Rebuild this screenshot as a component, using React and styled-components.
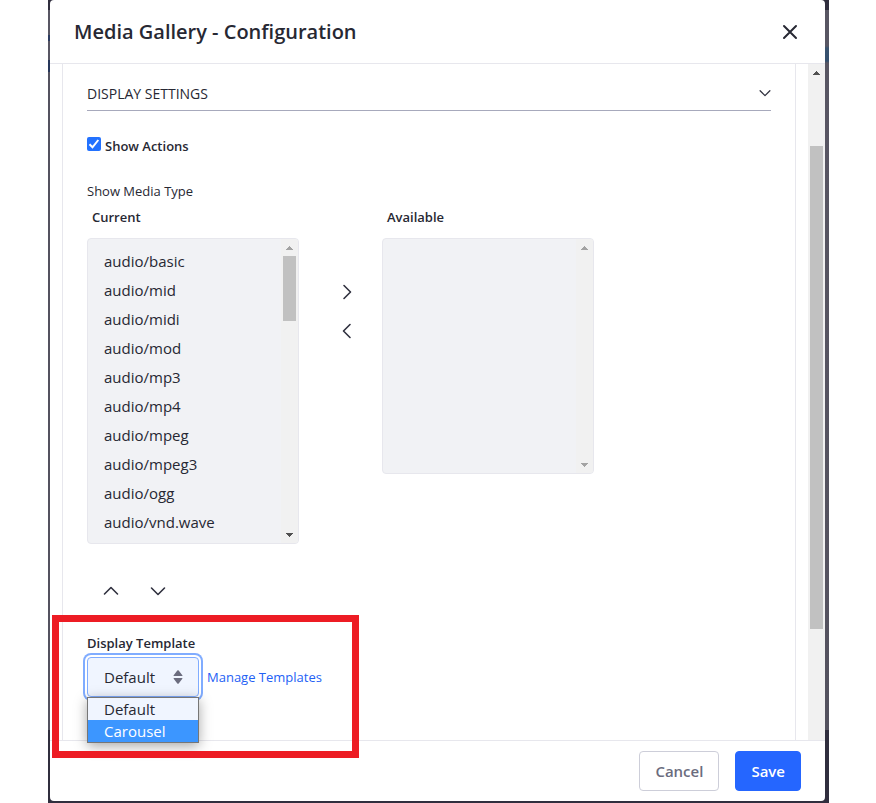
import React, { useState } from "react";
import styled, { createGlobalStyle } from "styled-components";

const GlobalStyle = createGlobalStyle`
  *, *::before, *::after { box-sizing: border-box; }
  body {
    margin: 0;
    background: #fff;
    color: #272833;
    font-family: "Open Sans", "Noto Sans", sans-serif;
    font-size: 13px;
    line-height: 21px;
  }
  button, input, select { font: inherit; color: inherit; margin: 0; }
`;

const Page = styled.main`
  display: flex;
  min-height: 100vh;
  padding: 0 47px 0 48px;
`;

const Backdrop = styled.div`
  flex: 1;
  display: flex;
  padding: 0 4px 2px 2px;
  background:
    linear-gradient(#302e3e 10px, #585663 10px, #585663 46px, #3a536f 48px, #34506e 61px, #585663 63px, #54525f calc(100% - 73px), #302e3e calc(100% - 73px)) right / 50% 100% no-repeat,
    linear-gradient(#302e3e 10px, #585663 10px, #585663 35px, #2c3c60 35px, #2c3c60 41px, #585663 41px, #585663 60px, #26365a 60px, #26365a 72px, #54525f 72px, #54525f calc(100% - 73px), #302e3e calc(100% - 73px));
`;

const Dialog = styled.section`
  flex: 1;
  min-width: 0;
  display: flex;
  flex-direction: column;
  background: #fff;
  border-radius: 4px;
`;

const Header = styled.header`
  display: flex;
  align-items: center;
  justify-content: space-between;
  height: 64px;
  padding: 1px 19px 0 24px;
  border-bottom: 1px solid #e7e7ed;
`;

const Title = styled.h1`
  margin: 0;
  font-size: 20px;
  font-weight: 600;
  line-height: 28px;
`;

const IconButton = styled.button`
  display: flex;
  align-items: center;
  justify-content: center;
  width: 32px;
  height: 32px;
  padding: 0;
  border: 0;
  background: none;
  cursor: pointer;
`;

const Body = styled.div`
  flex: 1;
  display: flex;
  padding-left: 12px;
`;

const Panel = styled.div`
  flex: 1;
  min-width: 0;
  margin-right: 12px;
  padding: 0 24px;
  border: solid #e7e7ed;
  border-width: 0 1px;
`;

const SectionToggle = styled.button`
  display: flex;
  align-items: center;
  justify-content: space-between;
  width: 100%;
  height: 47px;
  padding: 12px 0 0;
  border: 0;
  border-bottom: 1px solid #a7a9bc;
  background: none;
  font-size: 14px;
  font-weight: 500;
  text-align: left;
`;

const CheckRow = styled.label`
  display: flex;
  align-items: flex-start;
  gap: 4px;
  margin: 25px 0 24px;
  font-weight: 600;
`;

const Checkbox = styled.input`
  appearance: none;
  width: 14px;
  height: 14px;
  && { margin-top: 1px; }
  border-radius: 2px;
  border: 1px solid #767676;
  &:checked {
    border: 0;
    background: #2372ff url("data:image/svg+xml,%3Csvg xmlns='http://www.w3.org/2000/svg' viewBox='0 0 14 14'%3E%3Cpath d='M2.5 7.3 5.5 10.300 11.300 3' fill='none' stroke='white' stroke-width='2'/%3E%3C/svg%3E");
  }
`;

const Group = styled.fieldset`
  min-width: 0;
  margin: 0;
  padding: 0;
  border: 0;
`;

const Legend = styled.legend`
  padding: 0;
  margin-bottom: 5px;
`;

const Transfer = styled.div`
  display: grid;
  grid-template-columns: minmax(0, 212px) 83px minmax(0, 212px);
  align-items: start;
`;

const ListLabel = styled.label`
  display: block;
  margin-bottom: 10px;
  padding-left: 5px;
  font-weight: 600;
`;

const ListFrame = styled.div`
  display: flex;
  height: ${(p) => (p.$tall ? 306 : 236)}px;
  border: 1px solid #e7e7ed;
  border-radius: 4px;
  background: #f1f2f5;
  overflow: hidden;
`;

const List = styled.select`
  appearance: none;
  flex: 1;
  min-width: 0;
  height: 100%;
  padding: 12px 16px 0;
  border: 0;
  outline: 0;
  background: none;
  font-size: 15px;
  overflow: hidden;
  scrollbar-width: none;
  option {
    min-height: 29px;
    padding: 0;
    line-height: 29px;
  }
`;

const Track = styled.div`
  display: flex;
  flex-direction: column;
  align-items: center;
  justify-content: space-between;
  flex: 0 0 17px;
  width: 17px;
  background: #f1f1f1;
`;

const TrackRun = styled.div`
  flex: 1;
  display: flex;
  flex-direction: column;
`;

const Thumb = styled.div`
  width: 13px;
  flex: 0 0 ${(p) => p.$size};
  margin-top: ${(p) => p.$offset || "0"};
  background: #c1c1c1;
`;

const ArrowCell = styled.span`
  display: flex;
  align-items: center;
  justify-content: center;
  height: 17px;
  color: ${(p) => (p.$muted ? "#a3a3a3" : "#505050")};
`;

const MoveButtons = styled.div`
  display: flex;
  flex-direction: column;
  align-items: center;
  gap: 7px;
  padding: 69px 0 0 13px;
`;

const OrderButtons = styled.div`
  display: flex;
  gap: 15px;
  margin: 31px 0 26px 8px;
`;

const Field = styled.div`
  position: relative;
`;

const FieldLabel = styled.label`
  display: block;
  margin-bottom: 3px;
  font-weight: 600;
`;

const FieldRow = styled.div`
  display: flex;
  align-items: center;
  gap: 8px;
`;

const Picker = styled.div`
  position: relative;
  width: 112px;
`;

const PickerSelect = styled.select`
  appearance: none;
  display: block;
  width: 100%;
  height: 40px;
  padding: 0 32px 0 16px;
  border: 1px solid #80acff;
  border-radius: 4px;
  outline: 0;
  background: #f0f5ff;
  box-shadow: 0 0 0 2px #fff, 0 0 0 4px #80acff;
  font-size: 15px;
`;

const PickerIcon = styled.span`
  position: absolute;
  top: 0;
  right: 16px;
  display: flex;
  align-items: center;
  height: 40px;
  pointer-events: none;
`;

const Menu = styled.ul`
  position: absolute;
  z-index: 2;
  top: 40px;
  left: 0;
  width: 100%;
  margin: 0;
  padding: 0;
  border: 1px solid #767676;
  background: #f0f5ff;
  box-shadow: 0 3px 12px rgba(0, 0, 0, 0.35);
  list-style: none;
  font-size: 15px;
`;

const MenuItem = styled.li`
  padding-left: 16px;
  line-height: 22px;
  color: ${(p) => (p.$active ? "#fff" : "inherit")};
  background: ${(p) => (p.$active ? "#3c96ff" : "none")};
`;

const Link = styled.a`
  color: #2361f5;
  text-decoration: none;
`;

const Highlight = styled.div`
  position: absolute;
  z-index: 3;
  top: -18px;
  left: -35px;
  width: 307px;
  height: 143px;
  border: 7px solid #ed1c24;
  pointer-events: none;
`;

const Footer = styled.footer`
  display: flex;
  justify-content: flex-end;
  gap: 16px;
  padding: 10px 24px;
  border-top: 1px solid #e7e7ed;
`;

const Button = styled.button`
  height: 40px;
  padding: 0 15px;
  border: 1px solid ${(p) => (p.$primary ? "#2566ff" : "#cdced9")};
  border-radius: 4px;
  background: ${(p) => (p.$primary ? "#2566ff" : "#fff")};
  color: ${(p) => (p.$primary ? "#fff" : "#6b6c7e")};
  font-size: 15px;
  font-weight: 600;
`;

const ANGLES = {
  up: "M1.500 11 8 4.500 14.500 11",
  down: "M1.500 5 8 11.500 14.500 5",
  right: "M5 1.500 11.500 8 5 14.500",
  left: "M11 1.500 4.500 8 11 14.500",
};

function Angle({ dir, size = 16, stroke = 1.6 }) {
  return (
    <svg width={size} height={size} viewBox="0 0 16 16" fill="none" stroke="#30313f" strokeWidth={stroke} strokeLinecap="round" strokeLinejoin="round" aria-hidden="true">
      <path d={ANGLES[dir]} />
    </svg>
  );
}

function Triangle({ down }) {
  return (
    <svg width="7" height="4" viewBox="0 0 7 4" fill="currentColor" shapeRendering="crispEdges" aria-hidden="true">
      <path d={down ? "M0 0h7v1H6v1H5v1H4v1H3V3H2V2H1V1H0z" : "M0 4h7V3H6V2H5V1H4V0H3v1H2v1H1v1H0z"} />
    </svg>
  );
}

function Scrollbar({ size, offset, upMuted, downMuted, hideDown }) {
  return (
    <Track aria-hidden="true">
      <ArrowCell $muted={upMuted}><Triangle /></ArrowCell>
      <TrackRun>{size && <Thumb $size={size} $offset={offset} />}</TrackRun>
      {!hideDown && <ArrowCell $muted={downMuted}><Triangle down /></ArrowCell>}
    </Track>
  );
}

const TYPES = [
  "audio/basic", "audio/mid", "audio/midi", "audio/mod", "audio/mp3",
  "audio/mp4", "audio/mpeg", "audio/mpeg3", "audio/ogg", "audio/vnd.wave",
];

export default function App() {
  const [actions, setActions] = useState(true);
  return (
    <Page>
      <GlobalStyle />
      <Backdrop>
        <Dialog role="dialog" aria-labelledby="title">
          <Header>
            <Title id="title">Media Gallery - Configuration</Title>
            <IconButton type="button" aria-label="Close">
              <svg width="16" height="16" viewBox="0 0 16 16" stroke="#272833" strokeWidth="2" strokeLinecap="round" aria-hidden="true">
                <path d="M2 2 14 14M14 2 2 14" />
              </svg>
            </IconButton>
          </Header>
          <Body>
            <Panel>
              <SectionToggle type="button" aria-expanded="true">
                DISPLAY SETTINGS
                <Angle dir="down" size={12} stroke={1.7} />
              </SectionToggle>
              <CheckRow>
                <Checkbox type="checkbox" checked={actions} onChange={(e) => setActions(e.target.checked)} />
                Show Actions
              </CheckRow>
              <Group>
                <Legend>Show Media Type</Legend>
                <Transfer>
                  <div>
                    <ListLabel htmlFor="current">Current</ListLabel>
                    <ListFrame $tall>
                      <List id="current" multiple size={10}>
                        {TYPES.map((t) => <option key={t}>{t}</option>)}
                      </List>
                      <Scrollbar size="65px" upMuted />
                    </ListFrame>
                  </div>
                  <MoveButtons>
                    <IconButton type="button" aria-label="Move right"><Angle dir="right" /></IconButton>
                    <IconButton type="button" aria-label="Move left"><Angle dir="left" /></IconButton>
                  </MoveButtons>
                  <div>
                    <ListLabel htmlFor="available">Available</ListLabel>
                    <ListFrame>
                      <List id="available" multiple />
                      <Scrollbar upMuted downMuted />
                    </ListFrame>
                  </div>
                </Transfer>
                <OrderButtons>
                  <IconButton type="button" aria-label="Move up"><Angle dir="up" /></IconButton>
                  <IconButton type="button" aria-label="Move down"><Angle dir="down" /></IconButton>
                </OrderButtons>
              </Group>
              <Field>
                <FieldLabel htmlFor="template">Display Template</FieldLabel>
                <FieldRow>
                  <Picker>
                    <PickerSelect id="template" defaultValue="Default">
                      <option>Default</option>
                      <option>Carousel</option>
                    </PickerSelect>
                    <PickerIcon>
                      <svg width="10" height="14" viewBox="0 0 10 14" fill="#6b6c7e" aria-hidden="true">
                        <path d="M.5 5.500 4.300.500q.7-.7 1.400 0L9.500 5.500q0 .5-.5.500H1q-.5 0-.5-.5zM.5 8.500 4.300 13.500q.7.700 1.400 0L9.500 8.500q0-.5-.5-.5H1q-.5 0-.5.500z" />
                      </svg>
                    </PickerIcon>
                    <Menu role="listbox" aria-label="Display Template">
                      <MenuItem role="option" aria-selected="false">Default</MenuItem>
                      <MenuItem role="option" aria-selected="true" $active>Carousel</MenuItem>
                    </Menu>
                  </Picker>
                  <Link href="#templates">Manage Templates</Link>
                </FieldRow>
                <Highlight />
              </Field>
            </Panel>
            <Scrollbar size="calc(100% - 176px)" offset="65px" hideDown />
          </Body>
          <Footer>
            <Button type="button">Cancel</Button>
            <Button type="button" $primary>Save</Button>
          </Footer>
        </Dialog>
      </Backdrop>
    </Page>
  );
}
